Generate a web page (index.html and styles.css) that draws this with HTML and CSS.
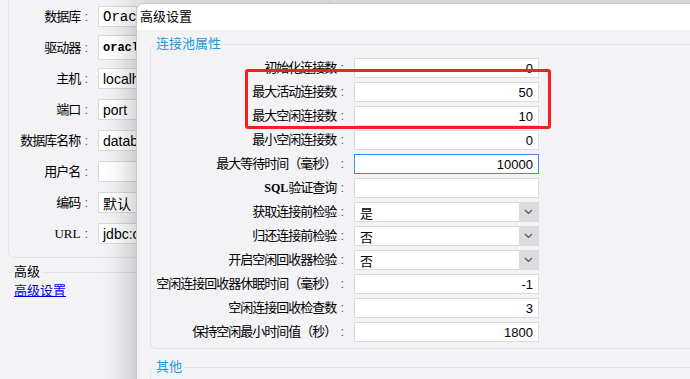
FILE: index.html
```html
<!DOCTYPE html>
<html lang="zh-CN">
<head>
    <meta charset="UTF-8">
    <meta name="viewport" content="width=device-width, initial-scale=1.0">
    <title>高级设置</title>
    <link rel="stylesheet" href="styles.css">
</head>
<body>
    <div class="page">
        <div class="conn-panel">
            <div class="field"><label>数据库<span class="colon">:</span></label><span class="box mono">Oracl</span></div>
            <div class="field"><label>驱动器<span class="colon">:</span></label><span class="box mono bold tall">oracle</span></div>
            <div class="field"><label>主机<span class="colon">:</span></label><span class="box">localh</span></div>
            <div class="field"><label>端口<span class="colon">:</span></label><span class="box">port</span></div>
            <div class="field"><label>数据库名称<span class="colon">:</span></label><span class="box">databa</span></div>
            <div class="field"><label>用户名<span class="colon">:</span></label><span class="box"></span></div>
            <div class="field"><label>编码<span class="colon">:</span></label><span class="box">默认</span></div>
            <div class="field"><label><span class="serif">URL</span><span class="colon">:</span></label><span class="box">jdbc:o</span></div>
        </div>
        <fieldset class="adv">
            <legend>高级</legend>
            <a href="#">高级设置</a>
        </fieldset>
    </div>

    <div class="dialog">
        <div class="dialog-title">高级设置</div>
        <div class="dialog-body">
            <fieldset class="group">
                <legend>连接池属性</legend>
                <div class="grid">
                    <label>初始化连接数<span class="colon">:</span></label><span class="box num">0</span>
                    <label>最大活动连接数<span class="colon">:</span></label><span class="box num">50</span>
                    <label>最大空闲连接数<span class="colon">:</span></label><span class="box num">10</span>
                    <label>最小空闲连接数<span class="colon">:</span></label><span class="box num">0</span>
                    <label>最大等待时间（毫秒）<span class="colon">:</span></label><span class="box num focus">10000</span>
                    <label><span class="serif">SQL</span>验证查询<span class="colon">:</span></label><span class="box"></span>
                    <label>获取连接前检验<span class="colon">:</span></label><span class="box select">是<i class="arrow"><svg width="9" height="6" viewBox="0 0 9 6"><path d="M1 1l3.5 3.5L8 1" fill="none" stroke="#555" stroke-width="1.2"/></svg></i></span>
                    <label>归还连接前检验<span class="colon">:</span></label><span class="box select">否<i class="arrow"><svg width="9" height="6" viewBox="0 0 9 6"><path d="M1 1l3.5 3.5L8 1" fill="none" stroke="#555" stroke-width="1.2"/></svg></i></span>
                    <label>开启空闲回收器检验<span class="colon">:</span></label><span class="box select">否<i class="arrow"><svg width="9" height="6" viewBox="0 0 9 6"><path d="M1 1l3.5 3.5L8 1" fill="none" stroke="#555" stroke-width="1.2"/></svg></i></span>
                    <label>空闲连接回收器休眠时间（毫秒）<span class="colon">:</span></label><span class="box num">-1</span>
                    <label>空闲连接回收检查数<span class="colon">:</span></label><span class="box num">3</span>
                    <label>保持空闲最小时间值（秒）<span class="colon">:</span></label><span class="box num">1800</span>
                </div>
            </fieldset>
            <fieldset class="group other">
                <legend>其他</legend>
            </fieldset>
        </div>
    </div>

    <div class="highlight"></div>
</body>
</html>
```

FILE: styles.css
```css
body {
    margin: 0;
    width: 690px;
    height: 379px;
    overflow: hidden;
    position: relative;
    background: #f3f3f6;
    font-family: "Liberation Sans", "Noto Sans CJK SC", sans-serif;
    font-size: 12px;
    color: #000;
}
.page {
    padding-left: 8px;
}
.conn-panel {
    width: 320px;
    margin-top: -20px;
    padding: 20px 0 8px;
    border: 1px solid #e1e1e6;
    border-radius: 6px;
}
.field {
    display: flex;
    align-items: center;
    height: 31px;
}
.field label {
    width: 79px;
    text-align: right;
    margin-right: 10px;
    line-height: 16px;
    font-size: 13px;
    letter-spacing: -1px;
}
.colon {
    color: #5e4a78;
    padding-left: 4px;
    letter-spacing: 0;
}
.serif {
    font-family: "Liberation Serif", serif;
    font-size: 13px;
    letter-spacing: 0;
}
.box {
    display: flex;
    align-items: center;
    box-sizing: border-box;
    height: 21px;
    padding: 0 4px;
    background: #fff;
    border: 1px solid #dadade;
    white-space: nowrap;
    overflow: hidden;
}
.field .box {
    width: 39px;
    font-size: 14px;
}
.field .box.tall {
    height: 25px;
}
.mono {
    font-family: "Liberation Mono", monospace;
}
.field .box.bold {
    font-weight: bold;
    font-size: 12px;
}
.adv {
    margin: 6px 0 0;
    padding: 0 0 0 6px;
    border: none;
    border-top: 1px solid #e1e1e6;
}
.adv legend {
    padding: 0 2px;
    margin-left: -2px;
    font-size: 13px;
    line-height: 16px;
}
.adv a {
    display: block;
    margin-top: 3px;
    color: #0000ee;
    font-size: 13px;
    line-height: 16px;
}
.dialog {
    position: absolute;
    left: 136px;
    top: 3px;
    width: 600px;
    height: 420px;
    background: #f3f3f6;
    border: 1px solid #c9c9cc;
    border-radius: 8px 0 0 0;
    box-shadow: -4px 0 28px 2px rgba(0, 0, 0, 0.22);
    overflow: hidden;
}
.dialog-title {
    height: 26px;
    line-height: 26px;
    padding-left: 3px;
    background: #fff;
    font-size: 13px;
}
.dialog-body {
    padding: 5px 0 0 13px;
}
.group {
    margin: 0;
    padding: 3px 0 4px;
    border: 1px solid #e1e1e6;
    border-radius: 6px;
}
.group legend {
    margin-left: 3px;
    padding: 0 2px;
    color: #1b9ad6;
    font-size: 13px;
    line-height: 18px;
}
.group.other {
    margin-top: 9px;
    height: 40px;
}
.grid {
    display: grid;
    grid-template-columns: 193px 185px;
    grid-auto-rows: 24px;
    column-gap: 10px;
    align-items: center;
}
.grid label {
    text-align: right;
    line-height: 16px;
    white-space: nowrap;
    font-size: 13px;
    letter-spacing: -1px;
}
.grid .serif {
    font-weight: bold;
    font-size: 12px;
}
.grid .box {
    height: 20px;
    font-size: 13px;
}
.box.num {
    justify-content: flex-end;
    padding-right: 5px;
}
.box.focus {
    border-color: #3d8ee8;
}
.box.select {
    padding-right: 0;
    padding-left: 5px;
}
.arrow {
    margin-left: auto;
    width: 19px;
    height: 100%;
    background: #dcdcdf;
    display: flex;
    align-items: center;
    justify-content: center;
}
.highlight {
    position: absolute;
    left: 245px;
    top: 69px;
    width: 300px;
    height: 54px;
    border: 3px solid #f4201c;
    border-radius: 3px;
}
```
